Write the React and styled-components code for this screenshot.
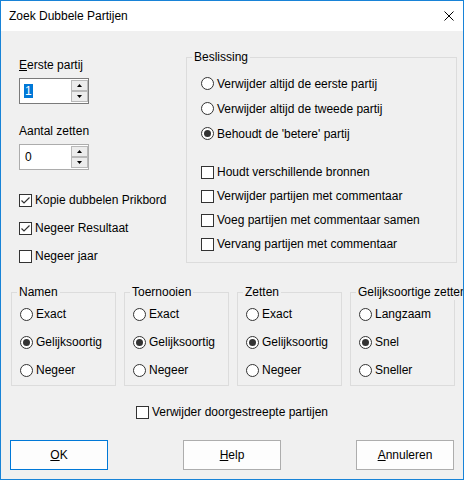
import React from 'react'
import styled, { createGlobalStyle } from 'styled-components'

const GlobalStyle = createGlobalStyle`
    html, body {
        margin: 0;
        padding: 0;
        background: #f0f0f0;
    }
    body {
        font-family: "Liberation Sans", Arial, sans-serif;
        font-size: 12px;
        color: #000;
    }
`

function CheckMark() {
    return (
        <svg width="11" height="11" viewBox="0 0 11 11">
            <path d="M1.5 5.5 L4 8 L9.5 2.5" fill="none" stroke="#333" strokeWidth="1.2" />
        </svg>
    )
}

function Check({ checked, children }) {
    return (
        <OptionRow $h={24}>
            <Box>{checked && <CheckMark />}</Box>
            <span>{children}</span>
        </OptionRow>
    )
}

function Radio({ checked, children, h = 28 }) {
    return (
        <OptionRow $h={h}>
            <Circle $checked={checked} />
            <span>{children}</span>
        </OptionRow>
    )
}

function Spinner({ value, selected, dark }) {
    return (
        <SpinBox $dark={dark}>
            <SpinField>
                {selected ? <Selection>{value}</Selection> : value}
            </SpinField>
            <SpinButtons>
                <SpinButton>
                    <svg width="5" height="3"><polygon points="0,3 2.5,0 5,3" fill="#000" /></svg>
                </SpinButton>
                <SpinButton>
                    <svg width="5" height="3"><polygon points="0,0 5,0 2.5,3" fill="#000" /></svg>
                </SpinButton>
            </SpinButtons>
        </SpinBox>
    )
}

function SmallGroup({ title, options, selected }) {
    return (
        <Group $pad="0 0 1px 5px">
            <Legend>{title}</Legend>
            <OptionList $indent={3}>
                {options.map((o) => (
                    <Radio key={o} checked={o === selected}>{o}</Radio>
                ))}
            </OptionList>
        </Group>
    )
}

export default function App() {
    return (
        <>
            <GlobalStyle />
            <Window>
                <TitleBar>
                    <span>Zoek Dubbele Partijen</span>
                    <svg width="10" height="10" viewBox="0 0 10 10">
                        <path d="M0.5 0.5 L9.5 9.5 M9.5 0.5 L0.5 9.5" stroke="#000" strokeWidth="1" />
                    </svg>
                </TitleBar>
                <Body>
                    <TopRow>
                        <LeftCol>
                            <FieldLabel><u>E</u>erste partij</FieldLabel>
                            <Spinner value="1" selected dark />
                            <FieldLabel $top={19}>Aantal zetten</FieldLabel>
                            <Spinner value="0" />
                            <LeftChecks>
                                <CheckRow><Box><CheckMark /></Box><span>Kopie dubbelen Prikbord</span></CheckRow>
                                <CheckRow><Box><CheckMark /></Box><span>Negeer Resultaat</span></CheckRow>
                                <CheckRow><Box /><span>Negeer jaar</span></CheckRow>
                            </LeftChecks>
                        </LeftCol>
                        <Group $pad="0 0 6px 5px">
                            <Legend>Beslissing</Legend>
                            <OptionList $indent={9} $top={6}>
                                <Radio h={25}>Verwijder altijd de eerste partij</Radio>
                                <Radio h={25}>Verwijder altijd de tweede partij</Radio>
                                <Radio h={25} checked>Behoudt de 'betere' partij</Radio>
                            </OptionList>
                            <OptionList $indent={9} $top={14}>
                                <Check>Houdt verschillende bronnen</Check>
                                <Check>Verwijder partijen met commentaar</Check>
                                <Check>Voeg partijen met commentaar samen</Check>
                                <Check>Vervang partijen met commentaar</Check>
                            </OptionList>
                        </Group>
                    </TopRow>
                    <GroupRow>
                        <SmallGroup title="Namen" options={['Exact', 'Gelijksoortig', 'Negeer']} selected="Gelijksoortig" />
                        <SmallGroup title="Toernooien" options={['Exact', 'Gelijksoortig', 'Negeer']} selected="Gelijksoortig" />
                        <SmallGroup title="Zetten" options={['Exact', 'Gelijksoortig', 'Negeer']} selected="Gelijksoortig" />
                        <SmallGroup title="Gelijksoortige zetten" options={['Langzaam', 'Snel', 'Sneller']} selected="Snel" />
                    </GroupRow>
                    <StrikeRow>
                        <Box /><span>Verwijder doorgestreepte partijen</span>
                    </StrikeRow>
                    <ButtonRow>
                        <Button $default><u>O</u>K</Button>
                        <Button><u>H</u>elp</Button>
                        <Button><u>A</u>nnuleren</Button>
                    </ButtonRow>
                </Body>
            </Window>
        </>
    )
}

const Window = styled.div`
    width: 464px;
    height: 480px;
    box-sizing: border-box;
    border: 1px solid #1883d7;
    display: flex;
    flex-direction: column;
    overflow: hidden;
    background: #f0f0f0;
`

const TitleBar = styled.div`
    height: 30px;
    flex-shrink: 0;
    background: #fff;
    display: flex;
    align-items: center;
    justify-content: space-between;
    padding: 0 9px 0 8px;
    line-height: 16px;
`

const Body = styled.div`
    flex: 1;
    display: flex;
    flex-direction: column;
`

const TopRow = styled.div`
    display: grid;
    grid-template-columns: 167px 271px;
    align-items: start;
    margin-top: 18px;
    padding-left: 18px;
`

const LeftCol = styled.div`
    display: flex;
    flex-direction: column;
    align-items: flex-start;
    padding-top: 8px;
`

const FieldLabel = styled.div`
    line-height: 16px;
    margin-top: ${p => p.$top || 0}px;
    margin-bottom: 5px;
`

const SpinBox = styled.div`
    width: 70px;
    height: 26px;
    box-sizing: border-box;
    border: 1px solid ${p => p.$dark ? '#7a7a7a' : '#acacac'};
    background: #fff;
    display: flex;
`

const SpinField = styled.div`
    flex: 1;
    display: flex;
    align-items: center;
    padding-left: 5px;
`

const Selection = styled.span`
    background: #0078d7;
    color: #fff;
    line-height: 14px;
    padding: 0 1px;
    margin-left: -1px;
`

const SpinButtons = styled.div`
    width: 17px;
    display: flex;
    flex-direction: column;
    gap: 0;
    padding: 1px 0;
`

const SpinButton = styled.div`
    height: 11px;
    box-sizing: border-box;
    border: 1px solid #b9b9b9;
    background: #ececec;
    display: flex;
    align-items: center;
    justify-content: center;
`

const LeftChecks = styled.div`
    margin-top: 16px;
    display: flex;
    flex-direction: column;
`

const CheckRow = styled.div`
    height: 28px;
    display: flex;
    align-items: center;
    gap: 3px;
    white-space: nowrap;
`

const Box = styled.span`
    width: 13px;
    height: 13px;
    box-sizing: border-box;
    border: 1px solid #333;
    background: #fff;
    display: flex;
    align-items: center;
    justify-content: center;
    flex-shrink: 0;
`

const Circle = styled.span`
    width: 13px;
    height: 13px;
    box-sizing: border-box;
    border: 1px solid #333;
    border-radius: 50%;
    background: #fff;
    display: flex;
    align-items: center;
    justify-content: center;
    flex-shrink: 0;

    &::after {
        content: '';
        width: 7px;
        height: 7px;
        border-radius: 50%;
        background: #333;
        display: ${p => p.$checked ? 'block' : 'none'};
    }
`

const OptionRow = styled.div`
    height: ${p => p.$h}px;
    display: flex;
    align-items: center;
    gap: 3px;
    white-space: nowrap;
`

const Group = styled.fieldset`
    margin: 0;
    min-width: 0;
    width: 100%;
    box-sizing: border-box;
    border: 1px solid #dcdcdc;
    padding: ${p => p.$pad};
`

const Legend = styled.legend`
    padding: 0 2px;
    line-height: 16px;
    white-space: nowrap;
`

const OptionList = styled.div`
    display: flex;
    flex-direction: column;
    padding-left: ${p => p.$indent}px;
    margin-top: ${p => p.$top || 0}px;
`

const GroupRow = styled.div`
    display: grid;
    grid-template-columns: repeat(4, 105px);
    column-gap: 8px;
    margin-top: 14px;
    padding-left: 10px;
`

const StrikeRow = styled.div`
    height: 16px;
    margin-top: 18px;
    display: flex;
    align-items: center;
    justify-content: center;
    gap: 3px;
`

const ButtonRow = styled.div`
    display: flex;
    justify-content: space-between;
    margin-top: 20px;
    padding: 0 9px;
`

const Button = styled.div`
    width: 98px;
    height: 30px;
    box-sizing: border-box;
    border: 1px solid ${p => p.$default ? '#0078d7' : '#adadad'};
    background: #fdfdfd;
    display: flex;
    align-items: center;
    justify-content: center;
`
